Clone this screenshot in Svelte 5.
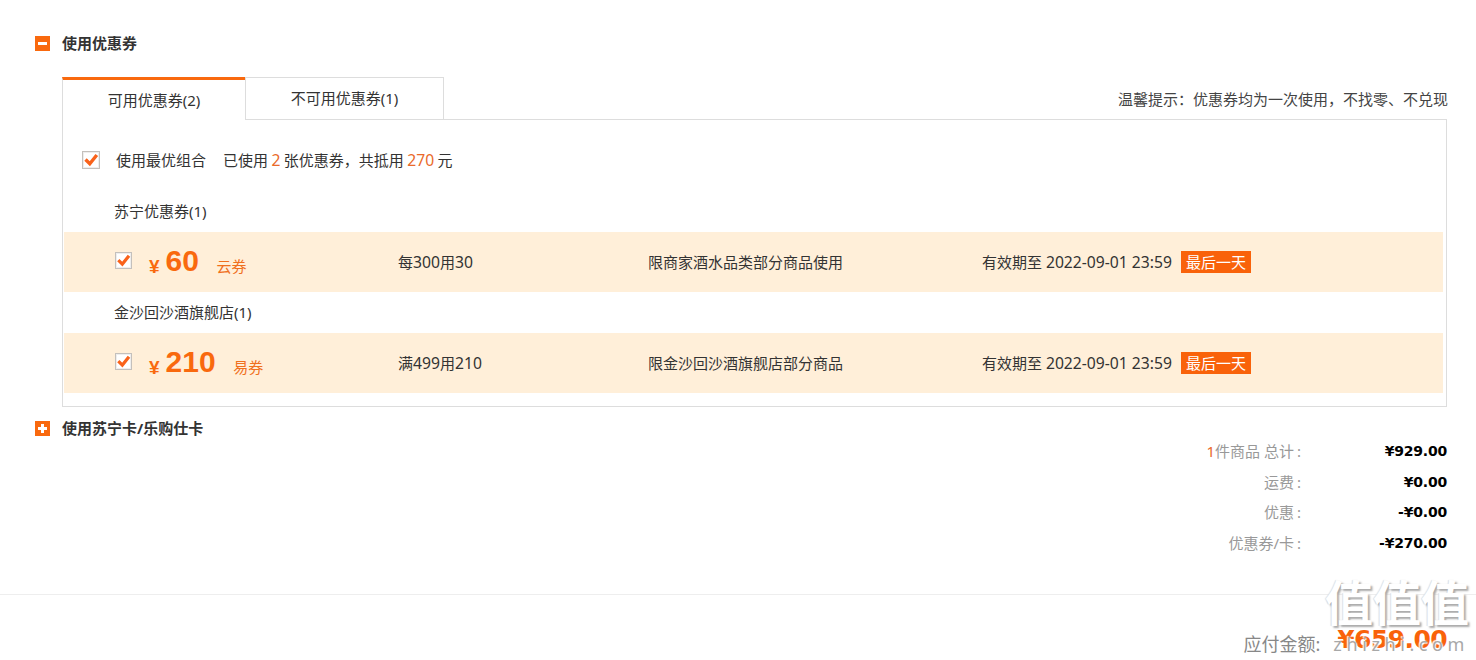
<script>
  const coupons = [
    {
      shop: '苏宁优惠券(1)',
      amount: 60,
      kind: '云券',
      rule: '每300用30',
      desc: '限商家酒水品类部分商品使用',
    },
    {
      shop: '金沙回沙酒旗舰店(1)',
      amount: 210,
      kind: '易券',
      rule: '满499用210',
      desc: '限金沙回沙酒旗舰店部分商品',
    },
  ];

  const totals = [
    { label: '优惠', value: '-¥0.00' },
    { label: '优惠券/卡', value: '-¥270.00' },
  ];

  // digits are set a little larger than the CJK text around them
  function parts(text) {
    return text.split(/(\d+)/);
  }
</script>

{#snippet check(cls)}
  <span class="check {cls}">
    <svg viewBox="0 0 18 18">
      <path d="M3.5 8.5 L7.8 12.8 L14.8 4" fill="none" stroke="#f9621a" stroke-width="3.4" />
    </svg>
  </span>
{/snippet}

<div class="page">
  <div class="head first">
    <span class="toggle"><i class="h"></i></span>
    <span>使用优惠券</span>
  </div>

  <div class="coupon-box">
    <div class="tab-row">
      <div class="tab active">可用优惠券(2)</div>
      <div class="tab">不可用优惠券(1)</div>
      <div class="tip">温馨提示：优惠券均为一次使用，不找零、不兑现</div>
    </div>

    <div class="panel">
      <div class="best">
        {@render check('big')}
        <span class="best-label">使用最优组合</span>
        <span class="best-info">已使用 <em>2</em> 张优惠券，共抵用 <em>270</em> 元</span>
      </div>

      {#each coupons as c, i}
        <div class="shop" class:first-shop={i === 0}>{c.shop}</div>
        <div class="coupon">
          <div class="money">
            {@render check('small')}
            <span class="yen">¥</span>
            <span class="amount">{c.amount}</span>
            <span class="kind">{c.kind}</span>
          </div>
          <div>
            {#each parts(c.rule) as p, n}{#if n % 2}<span class="num">{p}</span>{:else}{p}{/if}{/each}
          </div>
          <div>{c.desc}</div>
          <div class="date">
            <span>有效期至 <span class="num">2022-09-01 23:59</span></span>
            <span class="tag">最后一天</span>
          </div>
        </div>
      {/each}
    </div>
  </div>

  <div class="head second">
    <span class="toggle"><i class="h"></i><i class="v"></i></span>
    <span>使用苏宁卡/乐购仕卡</span>
  </div>

  <div class="totals">
    <div class="row">
      <span class="label"><b>1</b>件商品 总计<span class="colon">:</span></span>
      <span class="value">¥929.00</span>
    </div>
    <div class="row">
      <span class="label">运费<span class="colon">:</span></span>
      <span class="value">¥0.00</span>
    </div>
    {#each totals as t}
      <div class="row">
        <span class="label">{t.label}<span class="colon">:</span></span>
        <span class="value">{t.value}</span>
      </div>
    {/each}
  </div>

  <div class="pay">
    <span class="pay-label">应付金额:</span>
    <span class="pay-value">¥659.00</span>
  </div>

  <div class="mark">
    <div class="mark-big">值值值</div>
    <div class="mark-small">zhizhi.com</div>
  </div>
</div>

<style>
  :global(body) {
    margin: 0;
    background: #fff;
    overflow: hidden;
  }

  .page {
    position: relative;
    width: 1476px;
    height: 660px;
    overflow: hidden;
    color: #333;
    font-family: 'Noto Sans', 'Noto Sans CJK SC', sans-serif;
    font-size: 15px;
    line-height: 20px;
  }

  .head {
    display: flex;
    align-items: center;
    gap: 12px;
    margin-left: 35px;
    font-weight: 700;
    color: #333;
    height: 20px;
  }

  .head.first {
    padding-top: 33px;
  }

  .head.second {
    margin-top: 11px;
  }

  .toggle {
    position: relative;
    width: 15px;
    height: 15px;
    background: #f9690e;
    flex-shrink: 0;
  }

  .toggle i {
    position: absolute;
    background: #fff;
  }

  .toggle .h {
    left: 3px;
    top: 6px;
    width: 9px;
    height: 3px;
  }

  .toggle .v {
    left: 6px;
    top: 3px;
    width: 3px;
    height: 9px;
  }

  .coupon-box {
    margin: 24px 29px 0 62px;
  }

  .tab-row {
    display: flex;
    align-items: stretch;
    height: 43px;
    position: relative;
    z-index: 1;
  }

  .tab {
    box-sizing: border-box;
    width: 199px;
    height: 43px;
    line-height: 41px;
    text-align: center;
    border: 1px solid #ddd;
    color: #333;
  }

  .tab.active {
    width: 183px;
    height: 44px;
    border-right: none;
    border-top: 3px solid #f9690e;
    border-bottom: none;
    background: #fff;
    line-height: 40px;
  }

  .tip {
    margin-left: auto;
    margin-right: -1px;
    align-self: flex-end;
    padding-bottom: 11px;
    color: #444;
  }

  .panel {
    box-sizing: border-box;
    height: 288px;
    margin-top: -1px;
    padding: 0 3px 0 1px;
    border: 1px solid #ddd;
  }

  .best {
    display: flex;
    align-items: center;
    height: 20px;
    padding: 30px 0 0 18px;
  }

  .best-label {
    margin: 0 17px 0 16px;
  }

  .best-info {
    word-spacing: -0.5px;
  }

  em {
    font-style: normal;
    font-size: 15.7px;
    color: #ea6a2a;
  }

  .num {
    font-size: 15.7px;
  }

  .check {
    display: inline-block;
    box-sizing: border-box;
    flex-shrink: 0;
    border: 1px solid #c4c0bc;
    box-shadow: inset 0 0 0 1px #eee;
    background: #fff;
    position: relative;
  }

  .check svg {
    position: absolute;
    left: -1px;
    top: -1px;
    width: calc(100% + 2px);
    height: calc(100% + 2px);
  }

  .check.big {
    width: 18px;
    height: 18px;
  }

  .check.small {
    width: 17px;
    height: 17px;
    margin-top: -3px;
  }

  .shop {
    height: 20px;
    margin-top: 10px;
    margin-bottom: 11px;
    padding-left: 50px;
  }

  .shop.first-shop {
    margin-top: 31px;
  }

  .coupon {
    display: grid;
    grid-template-columns: 334px 250px 334px 1fr;
    align-items: center;
    height: 60px;
    background: #ffefd9;
  }

  .money {
    display: flex;
    align-items: center;
    padding-left: 51px;
  }

  .yen {
    margin-left: 17px;
    color: #f9690e;
    font-family: 'Liberation Sans', sans-serif;
    font-size: 19px;
    font-weight: 700;
    line-height: 20px;
    padding-top: 9px;
  }

  .amount {
    margin-left: 6px;
    margin-top: -2px;
    color: #f9690e;
    font-family: 'Liberation Sans', sans-serif;
    font-size: 30px;
    font-weight: 700;
    line-height: 32px;
  }

  .kind {
    margin-left: 17.5px;
    padding-top: 8px;
    color: #f0701e;
  }

  .date {
    display: flex;
    align-items: center;
    gap: 9px;
  }

  .tag {
    width: 70px;
    height: 22px;
    line-height: 22px;
    text-align: center;
    color: #fff;
    background: #f9620a;
  }

  .totals {
    margin: -2px 29px 0 0;
  }

  .row {
    display: flex;
    justify-content: flex-end;
    align-items: center;
    height: 30.6px;
  }

  .label {
    color: #999;
  }

  .label b {
    font-weight: 400;
    color: #ea6a2a;
  }

  .colon {
    margin-left: 3px;
  }

  .value {
    width: 146px;
    text-align: right;
    color: #000;
    font-family: 'DejaVu Sans', sans-serif;
    font-size: 14px;
    font-weight: 700;
    letter-spacing: -0.2px;
  }

  .pay {
    display: flex;
    justify-content: flex-end;
    align-items: center;
    gap: 17px;
    height: 40px;
    margin-top: 36px;
    padding: 29px 29px 0 0;
    border-top: 1px solid #eee;
  }

  .pay-label {
    color: #888;
    font-size: 18px;
  }

  .pay-value {
    margin-top: -8px;
    color: #f9620a;
    font-family: 'DejaVu Sans', sans-serif;
    font-size: 25px;
    font-weight: 700;
    letter-spacing: -0.6px;
  }

  /* site watermark, sits over the bottom right corner */
  .mark {
    position: absolute;
    right: 7px;
    top: 572px;
    text-align: right;
    white-space: nowrap;
    pointer-events: none;
  }

  .mark-big {
    font-size: 48px;
    font-weight: 700;
    line-height: 62px;
    color: #fff;
    text-shadow: 2px 2px 2px #aaa, -1px 0 1px #ddd;
  }

  .mark-small {
    font-size: 18px;
    line-height: 20px;
    letter-spacing: 4.6px;
    color: #a8a8a8;
    text-shadow: 0 0 2px #fff, 1px 1px 1px #fff, -1px -1px 1px #fff;
  }
</style>
